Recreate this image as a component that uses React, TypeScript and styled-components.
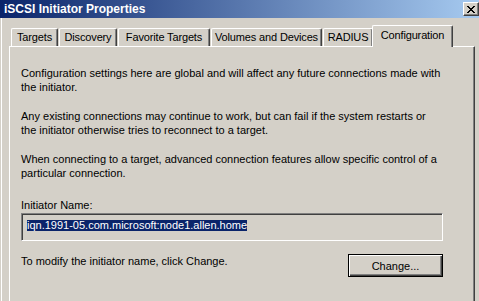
import React from 'react';
import styled, { createGlobalStyle } from 'styled-components';

const GlobalStyle = createGlobalStyle`
    html, body {
        margin: 0;
        padding: 0;
        background: #d4d0c8;
    }
    body {
        font-family: "Liberation Sans", Arial, sans-serif;
        font-size: 11px;
        color: #000;
    }
`;

const Window = styled.div`
    width: 479px;
    height: 301px;
    overflow: hidden;
    background: #d4d0c8;
    display: flex;
    flex-direction: column;
`;

const TitleBar = styled.div`
    height: 18px;
    flex-shrink: 0;
    display: flex;
    align-items: center;
    padding-left: 4px;
    background: linear-gradient(to right, #0a246a, #a6caf0);
    color: #fff;
    font-weight: bold;
    font-size: 12px;
`;

const TitleText = styled.span`
    flex: 1;
`;

const CloseButton = styled.div`
    width: 16px;
    height: 14px;
    box-sizing: border-box;
    background: #d4d0c8;
    border-top: 1px solid #fff;
    border-left: 1px solid #fff;
    border-right: 1px solid #404040;
    border-bottom: 1px solid #404040;
    box-shadow: inset -1px -1px 0 #808080;
    display: flex;
    align-items: center;
    justify-content: center;
`;

const Body = styled.div`
    flex: 1;
    padding: 7px 4px 0 9px;
    box-shadow: inset 1px 0 0 #d4d0c8, inset 2px 0 0 #fff;
`;

const TabRow = styled.div`
    display: flex;
    align-items: flex-end;
    height: 21px;
    padding-left: 2px;
`;

const Tab = styled.div<{ $width: number; $active?: boolean }>`
    position: relative;
    box-sizing: border-box;
    width: ${(p) => p.$width}px;
    height: ${(p) => (p.$active ? 22 : 18)}px;
    margin: ${(p) => (p.$active ? '0 -2px -1px -2px' : '0 1px 0 0')};
    z-index: ${(p) => (p.$active ? 1 : 0)};
    background: #d4d0c8;
    border-top: 1px solid #fff;
    border-left: 1px solid #fff;
    border-right: 1px solid #404040;
    border-radius: 2px 2px 0 0;
    box-shadow: inset -1px 0 0 #808080;
    display: flex;
    justify-content: center;
    padding-top: ${(p) => (p.$active ? 3 : 2)}px;
    white-space: nowrap;
    letter-spacing: -0.15px;
`;

const Panel = styled.div`
    border-top: 1px solid #fff;
    border-left: 1px solid #fff;
    border-right: 1px solid #404040;
    box-shadow: inset -1px 0 0 #808080;
    padding: 19px 31px 40px 11px;
    height: 300px;
`;

const Para = styled.p`
    margin: 0 0 15px 0;
    line-height: 14px;
`;

const Label = styled.div`
    margin-top: 18px;
    line-height: 14px;
`;

const NameBox = styled.div`
    box-sizing: border-box;
    height: 28px;
    margin-top: 1px;
    border-top: 1px solid #808080;
    border-left: 1px solid #808080;
    border-right: 1px solid #fff;
    border-bottom: 1px solid #fff;
    box-shadow: inset 1px 1px 0 #404040;
    padding: 5px 0 0 5px;
`;

const Selected = styled.span`
    background: #0a246a;
    color: #fff;
    line-height: 11px;
    display: inline-block;
`;

const BottomRow = styled.div`
    display: flex;
    justify-content: space-between;
    align-items: flex-start;
    margin-top: 13px;
`;

const Hint = styled.span`
    line-height: 14px;
`;

const Button = styled.div`
    box-sizing: border-box;
    width: 95px;
    height: 23px;
    border: 1px solid #000;
    background: #d4d0c8;
    box-shadow: inset 1px 1px 0 #fff, inset -1px -1px 0 #404040, inset -2px -2px 0 #808080;
    display: flex;
    align-items: center;
    justify-content: center;
`;

const tabs = [
    { label: 'Targets', width: 47 },
    { label: 'Discovery', width: 58 },
    { label: 'Favorite Targets', width: 92 },
    { label: 'Volumes and Devices', width: 111 },
    { label: 'RADIUS', width: 50 },
    { label: 'Configuration', width: 81, active: true },
];

const App = () => {
    return (
        <>
            <GlobalStyle />
            <Window>
                <TitleBar>
                    <TitleText>iSCSI Initiator Properties</TitleText>
                    <CloseButton>
                        <svg width="8" height="7" viewBox="0 0 8 7">
                            <path d="M0 0 L7 7 M1 0 L8 7 M7 0 L0 7 M8 0 L1 7" stroke="#000" strokeWidth="1" />
                        </svg>
                    </CloseButton>
                </TitleBar>
                <Body>
                    <TabRow>
                        {tabs.map((t) => (
                            <Tab key={t.label} $width={t.width} $active={t.active}>{t.label}</Tab>
                        ))}
                    </TabRow>
                    <Panel>
                        <Para>Configuration settings here are global and will affect any future connections made with the initiator.</Para>
                        <Para>Any existing connections may continue to work, but can fail if the system restarts or the initiator otherwise tries to reconnect to a target.</Para>
                        <Para>When connecting to a target, advanced connection features allow specific control of a particular connection.</Para>
                        <Label>Initiator Name:</Label>
                        <NameBox>
                            <Selected>iqn.1991-05.com.microsoft:node1.allen.home</Selected>
                        </NameBox>
                        <BottomRow>
                            <Hint>To modify the initiator name, click Change.</Hint>
                            <Button>Change...</Button>
                        </BottomRow>
                    </Panel>
                </Body>
            </Window>
        </>
    );
};

export default App;
